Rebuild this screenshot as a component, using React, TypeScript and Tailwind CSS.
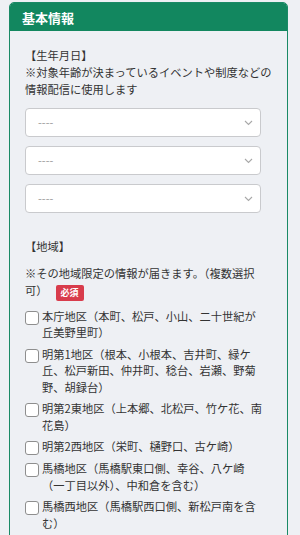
import React from "react";

const areas: string[][] = [
    ["本庁地区（本町、松戸、小山、二十世紀が", "丘美野里町）"],
    ["明第1地区（根本、小根本、吉井町、緑ケ", "丘、松戸新田、仲井町、稔台、岩瀬、野菊", "野、胡録台）"],
    ["明第2東地区（上本郷、北松戸、竹ケ花、南", "花島）"],
    ["明第2西地区（栄町、樋野口、古ケ崎）"],
    ["馬橋地区（馬橋駅東口側、幸谷、八ケ崎", "（一丁目以外）、中和倉を含む）"],
    ["馬橋西地区（馬橋駅西口側、新松戸南を含", "む）"],
];

function Select() {
    return (
        <div className="h-[29px] w-[236px] rounded-[4px] border border-[#c9cacd] bg-white pl-3 pr-[7px] flex items-center justify-between">
            <span className="text-[11px] text-[#9a9a9a]">----</span>
            <svg width="9" height="6" viewBox="0 0 9 6" fill="none">
                <path d="M1 1l3.5 3.5L8 1" stroke="#a8a8a8" strokeWidth="1.1" />
            </svg>
        </div>
    );
}

export default function App() {
    return (
        <div
            className="w-[300px] min-h-[535px] bg-[#eef0f4] pt-[2px] text-[#333]"
            style={{ fontFamily: '"Noto Sans CJK JP", "Noto Sans", sans-serif' }}
        >
            <div className="ml-[9px] w-[279px] rounded-t-[5px] border border-[#1a8a66] min-h-[540px]">
                {/* Header */}
                <div className="h-[28px] bg-[#12875f] pl-3 flex items-center rounded-t-[4px]">
                    <h2 className="text-[13px] font-bold text-white leading-none">基本情報</h2>
                </div>

                <div className="pt-4 px-[15px] text-[11.25px]">
                    {/* 生年月日 */}
                    <div className="leading-[17px] whitespace-nowrap">
                        <p>【生年月日】</p>
                        <p>
                            ※対象年齢が決まっているイベントや制度などの
                            <br />
                            情報配信に使用します
                        </p>
                    </div>
                    <div className="mt-[10px] flex flex-col gap-[9px]">
                        <Select />
                        <Select />
                        <Select />
                    </div>

                    {/* 地域 */}
                    <p className="mt-[25px] leading-[17px]">【地域】</p>
                    <p className="mt-[10px] leading-[17px] whitespace-nowrap">
                        ※その地域限定の情報が届きます。（複数選択
                        <br />
                        可）
                        <span className="ml-[8px] inline-flex h-[16px] px-[5px] items-center rounded-[2px] bg-[#d83c4c] text-[9px] font-bold text-white align-[-1px] leading-none">
                            必須
                        </span>
                    </p>

                    <div className="mt-[7px] flex flex-col gap-[5px]">
                        {areas.map((lines, i) => (
                            <label key={i} className="flex items-start gap-[3px]">
                                <span className="mt-[3px] h-[14px] w-[14px] shrink-0 rounded-[3px] border border-[#8e8e8e] bg-white" />
                                <span className="leading-[16.5px] whitespace-nowrap">
                                    {lines.map((l, j) => (
                                        <React.Fragment key={j}>
                                            {j > 0 && <br />}
                                            {l}
                                        </React.Fragment>
                                    ))}
                                </span>
                            </label>
                        ))}
                    </div>
                </div>
            </div>
        </div>
    );
}
